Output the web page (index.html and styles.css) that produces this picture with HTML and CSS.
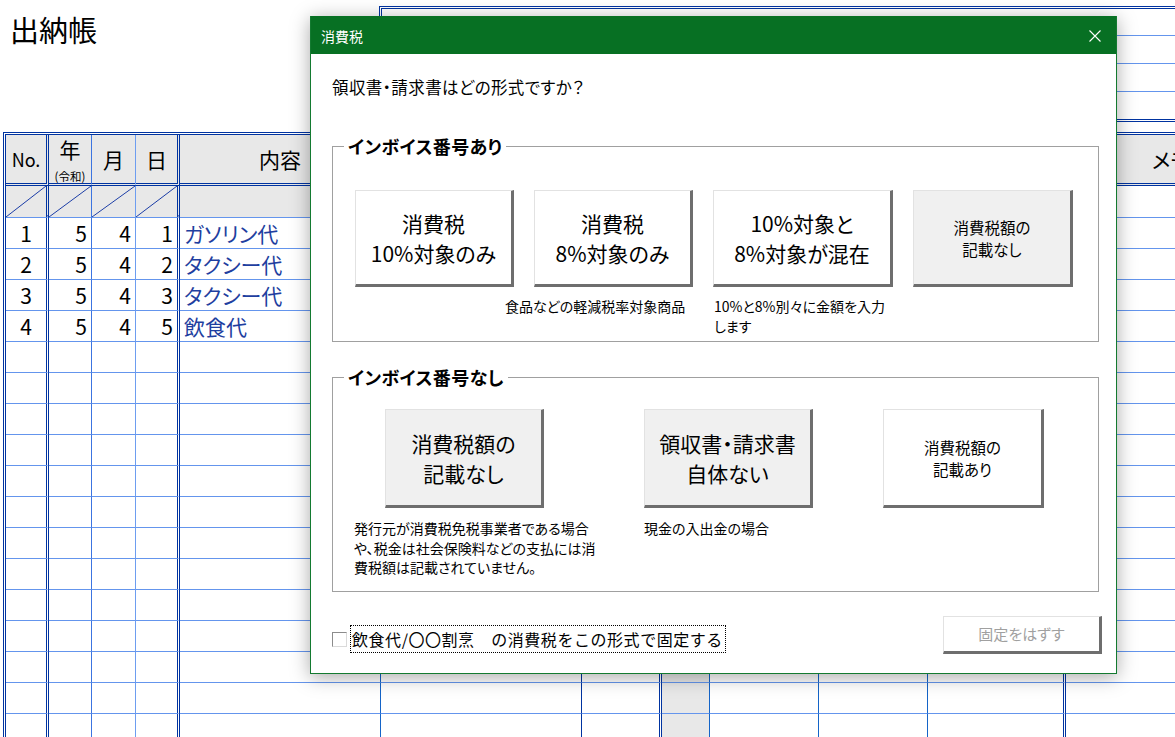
FILE: index.html
```html
<!DOCTYPE html>
<html lang="ja">
<head>
<meta charset="utf-8">
<title>出納帳</title>
<link rel="stylesheet" href="styles.css">
</head>
<body>
<div class="page">
  <div class="top">
    <h1 class="title">出納帳</h1>
    <div class="info">
      <div class="info-row r1"></div>
      <div class="info-row r2"></div>
      <div class="info-row r3"></div>
      <div class="info-row r4"></div>
    </div>
  </div>

  <div class="sheet">
    <div class="row head">
      <span class="h-no">No.</span>
      <span class="h-year">年<small>(令和)</small></span>
      <span>月</span>
      <span>日</span>
      <span>内容</span>
      <span></span><span></span><span></span><span></span><span></span><span></span>
      <span class="h-memo">メモ</span>
    </div>
    <div class="row sub"><span></span><span></span><span></span><span></span><span></span><span></span><span></span><span></span><span></span><span></span><span></span><span></span></div>
    <div class="row"><span class="no">1</span><span class="num">5</span><span class="num">4</span><span class="num">1</span><span class="txt">ガソリン代</span><span></span><span></span><span></span><span></span><span></span><span></span><span></span></div>
    <div class="row"><span class="no">2</span><span class="num">5</span><span class="num">4</span><span class="num">2</span><span class="txt">タクシー代</span><span></span><span></span><span></span><span></span><span></span><span></span><span></span></div>
    <div class="row"><span class="no">3</span><span class="num">5</span><span class="num">4</span><span class="num">3</span><span class="txt">タクシー代</span><span></span><span></span><span></span><span></span><span></span><span></span><span></span></div>
    <div class="row"><span class="no">4</span><span class="num">5</span><span class="num">4</span><span class="num">5</span><span class="txt">飲食代</span><span></span><span></span><span></span><span></span><span></span><span></span><span></span></div>
    <div class="row"><span></span><span></span><span></span><span></span><span></span><span></span><span></span><span></span><span></span><span></span><span></span><span></span></div>
    <div class="row"><span></span><span></span><span></span><span></span><span></span><span></span><span></span><span></span><span></span><span></span><span></span><span></span></div>
    <div class="row"><span></span><span></span><span></span><span></span><span></span><span></span><span></span><span></span><span></span><span></span><span></span><span></span></div>
    <div class="row"><span></span><span></span><span></span><span></span><span></span><span></span><span></span><span></span><span></span><span></span><span></span><span></span></div>
    <div class="row"><span></span><span></span><span></span><span></span><span></span><span></span><span></span><span></span><span></span><span></span><span></span><span></span></div>
    <div class="row"><span></span><span></span><span></span><span></span><span></span><span></span><span></span><span></span><span></span><span></span><span></span><span></span></div>
    <div class="row"><span></span><span></span><span></span><span></span><span></span><span></span><span></span><span></span><span></span><span></span><span></span><span></span></div>
    <div class="row"><span></span><span></span><span></span><span></span><span></span><span></span><span></span><span></span><span></span><span></span><span></span><span></span></div>
    <div class="row"><span></span><span></span><span></span><span></span><span></span><span></span><span></span><span></span><span></span><span></span><span></span><span></span></div>
    <div class="row"><span></span><span></span><span></span><span></span><span></span><span></span><span></span><span></span><span></span><span></span><span></span><span></span></div>
    <div class="row"><span></span><span></span><span></span><span></span><span></span><span></span><span></span><span></span><span></span><span></span><span></span><span></span></div>
    <div class="row"><span></span><span></span><span></span><span></span><span></span><span></span><span></span><span></span><span></span><span></span><span></span><span></span></div>
    <div class="row"><span></span><span></span><span></span><span></span><span></span><span></span><span></span><span></span><span></span><span></span><span></span><span></span></div>
  </div>

  <div class="dialog">
    <div class="dlg-title">
      <span>消費税</span>
      <svg class="close" width="12" height="12" viewBox="0 0 12 12" aria-hidden="true"><path d="M0.5 0.5L11.5 11.5M11.5 0.5L0.5 11.5" stroke="#ffffff" stroke-width="1.1" fill="none"/></svg>
    </div>
    <div class="dlg-body">
      <p class="question">領収書・請求書はどの形式ですか？</p>

      <section class="group g1">
        <h2 class="group-title">インボイス番号あり</h2>
        <div class="btn-row r-a">
          <button class="btn big b1">消費税<br>10%対象のみ</button>
          <button class="btn big b2">消費税<br>8%対象のみ</button>
          <button class="btn big b3">10%対象と<br>8%対象が混在</button>
          <button class="btn small gray b4">消費税額の<br>記載なし</button>
        </div>
        <div class="note-row n-a">
          <p class="note n1">食品などの軽減税率対象商品</p>
          <p class="note n2">10%と8%別々に金額を入力<br>します</p>
        </div>
      </section>

      <section class="group g2">
        <h2 class="group-title">インボイス番号なし</h2>
        <div class="btn-row r-b">
          <button class="btn big gray b5">消費税額の<br>記載なし</button>
          <button class="btn big gray b6">領収書・請求書<br>自体ない</button>
          <button class="btn small b7">消費税額の<br>記載あり</button>
        </div>
        <div class="note-row n-b">
          <p class="note n3">発行元が消費税免税事業者である場合<br>や、税金は社会保険料などの支払には消<br>費税額は記載されていません。</p>
          <p class="note n4">現金の入出金の場合</p>
        </div>
      </section>

      <div class="footer">
        <div class="check-wrap">
          <span class="checkbox"></span>
          <span class="check-label">飲食代/〇〇割烹　の消費税をこの形式で固定する</span>
        </div>
        <button class="btn unfix">固定をはずす</button>
      </div>
    </div>
  </div>
</div>
</body>
</html>
```

FILE: styles.css
```css
html, body {
  margin: 0;
  padding: 0;
}

body {
  background: #ffffff;
  color: #000000;
  font-family: "Noto Sans CJK JP", "Noto Sans", sans-serif;
  font-feature-settings: "palt";
}

.page {
  position: relative;
  width: 1175px;
  height: 737px;
  overflow: hidden;
}

/* ---------- top area ---------- */
.top {
  display: flex;
  align-items: flex-start;
  height: 122px;
}

.title {
  flex: none;
  width: 379px;
  box-sizing: border-box;
  margin: 0;
  padding: 12px 0 0 10px;
  font-size: 29px;
  line-height: 34px;
  font-weight: 400;
}

.info {
  flex: none;
  width: 900px;
  margin-top: 6px;
  border: 3px double #0033a0;
  border-right: 0;
}

.info-row {
  box-sizing: border-box;
  border-bottom: 1px solid #6495ed;
}

.info-row.r1 { height: 27px; }
.info-row.r2 { height: 28px; }
.info-row.r3 { height: 28px; }
.info-row.r4 { height: 27px; border-bottom: 0; }

/* ---------- sheet ---------- */
.sheet {
  margin: 10px 0 0 3px;
  width: max-content;
  border-left: 3px double #0033a0;
  border-top: 3px double #0033a0;
}

.row {
  display: grid;
  grid-template-columns: 43px 43px 44px 44px 201px 201px 80px 48px 109px 109px 138px 210px;
  height: 31px;
}

.row > span {
  box-sizing: border-box;
  border-bottom: 1px solid #6495ed;
  border-right: 1px solid #1464c8;
  font-size: 21px;
  line-height: 30px;
  white-space: nowrap;
  overflow: hidden;
}

.row > span:nth-child(1),
.row > span:nth-child(4),
.row > span:nth-child(7),
.row > span:nth-child(11) {
  border-right: 3px double #0033a0;
}

.row > span:nth-child(2) { border-right-color: #3c74e0; }
.row > span:nth-child(3) { border-right-color: #6d9df0; }
.row > span:nth-child(6) { border-right-color: #0033a0; }
.row > span:nth-child(8) { background: #e8e8e8; }
.row > span:nth-child(12) { border-right: 0; }

.row.head {
  height: 51px;
}

.row.head > span {
  background: #e8e8e8;
  border-bottom: 3px double #0033a0;
  line-height: 48px;
  text-align: center;
}

.row.head > .h-no {
  font-size: 18px;
}

.row.head > .h-year {
  line-height: 28px;
}

.h-year small {
  display: block;
  margin-top: 6px;
  font-size: 11.5px;
  line-height: 14px;
}

.row.sub {
  height: 32px;
}

.row.sub > span:nth-child(-n+5) {
  background-color: #e8e8e8;
}

.row.sub > span:nth-child(-n+4) {
  background-image: linear-gradient(to bottom right, transparent calc(50% - 0.8px), #1a3ca6 50%, transparent calc(50% + 0.8px));
}

.no {
  text-align: center;
}

.num {
  text-align: right;
  padding-right: 4px;
}

.txt {
  color: #1f3fa0;
  padding-left: 4px;
}

/* ---------- dialog ---------- */
.dialog {
  position: absolute;
  left: 310px;
  top: 16px;
  width: 807px;
  height: 658px;
  box-sizing: border-box;
  border: 1px solid #137a30;
  background: #ffffff;
  box-shadow: 0 3px 18px rgba(0, 0, 0, 0.34);
}

.dlg-title {
  display: flex;
  align-items: center;
  justify-content: space-between;
  height: 37px;
  margin-top: -1px;
  padding: 1px 15px 0 10px;
  background: #077023;
  color: #ffffff;
  font-size: 14px;
}

.close {
  display: block;
}

.dlg-body {
  padding: 22px 17px 0 21px;
}

.question {
  margin: 0;
  font-size: 16.5px;
  letter-spacing: 0.4px;
  line-height: 22px;
}

.group {
  box-sizing: border-box;
  border: 1px solid #a0a0a0;
  padding-left: 22px;
}

.g1 {
  margin-top: 48px;
  height: 196px;
}

.g2 {
  margin-top: 35px;
  height: 215px;
}

.group-title {
  width: fit-content;
  margin: -12px 0 0 -11px;
  padding: 0 4px;
  background: #ffffff;
  font-size: 18px;
  letter-spacing: 0.4px;
  line-height: 22px;
  font-weight: 700;
}

.btn-row {
  display: flex;
  align-items: flex-start;
}

.r-a {
  margin-top: 33px;
  gap: 20px;
}

.r-b {
  margin-top: 21px;
}

button {
  font: inherit;
  font-feature-settings: "palt";
  color: inherit;
  margin: 0;
  padding: 0;
}

.btn {
  box-sizing: border-box;
  display: flex;
  align-items: center;
  justify-content: center;
  text-align: center;
  background: #ffffff;
  border-style: solid;
  border-width: 1px 3px 3px 1px;
  border-color: #e2e2e2 #6e6e6e #6e6e6e #e2e2e2;
  white-space: nowrap;
}

.btn.gray {
  background: #f0f0f0;
}

.btn.big {
  font-size: 21px;
  line-height: 30px;
}

.btn.small {
  font-size: 15.5px;
  line-height: 22px;
}

.r-a .btn { height: 97px; }
.b1, .b2 { width: 159px; }
.b3 { width: 180px; }
.b4 { width: 160px; }

.r-b .btn { height: 99px; }
.b5 { width: 159px; margin-left: 30px; }
.b6 { width: 169px; margin-left: 100px; }
.b7 { width: 161px; margin-left: 70px; }

.note-row {
  display: flex;
  align-items: flex-start;
}

.note {
  margin: 0;
  font-size: 14px;
  line-height: 19.5px;
  white-space: nowrap;
}

.n-a { margin-top: 10px; }
.n1 { margin-left: 150px; width: 209px; }

.n-b { margin-top: 11px; }
.n3 { margin-left: -1px; width: 290px; }

/* footer */
.footer {
  display: flex;
  align-items: flex-start;
  justify-content: space-between;
  margin-top: 24px;
  margin-right: -3px;
}

.check-wrap {
  display: flex;
  align-items: center;
  gap: 3px;
  margin-top: 9px;
}

.checkbox {
  display: block;
  width: 15px;
  height: 15px;
  box-sizing: border-box;
  border: 1px solid;
  border-color: #8c8c8c #dadada #dadada #8c8c8c;
  background: #ffffff;
}

.check-label {
  display: block;
  height: 28px;
  box-sizing: border-box;
  padding: 0 2px 0 1px;
  border: 1px dotted #000000;
  font-size: 16px;
  font-feature-settings: normal;
  letter-spacing: 0.55px;
  line-height: 26px;
  white-space: nowrap;
}

.unfix {
  width: 159px;
  height: 38px;
  color: #a0a0a0;
  font-size: 15px;
  line-height: 20px;
}
```
